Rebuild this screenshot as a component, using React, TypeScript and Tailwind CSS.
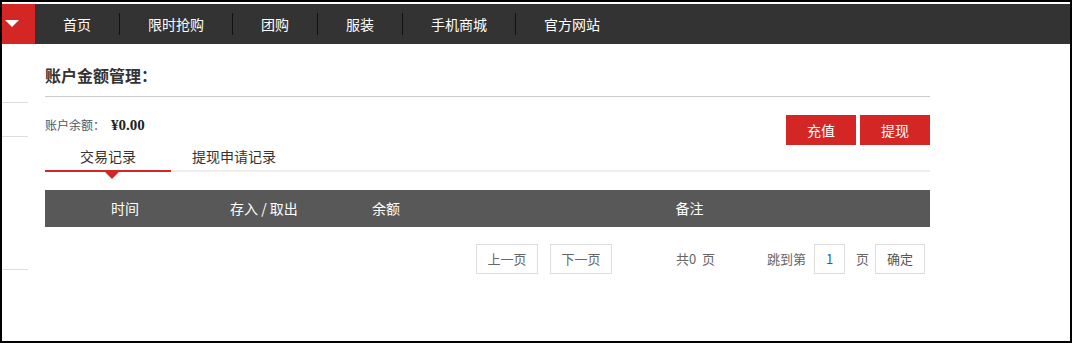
import React from "react";

const navItems = ["首页", "限时抢购", "团购", "服装", "手机商城", "官方网站"];

export default function App() {
  const cjk = { fontFamily: '"Noto Sans CJK SC", "Noto Sans", sans-serif' };
  return (
    <div
      className="w-[1072px] h-[343px] border-2 border-black bg-white pt-[2px] overflow-hidden"
      style={cjk}
    >
      {/* nav */}
      <div className="flex h-[40px] bg-[#333333]">
        <div className="w-[33px] h-full bg-[#d52626] flex items-center pl-[3px] pb-[2px]">
          <div className="w-0 h-0 border-l-[7px] border-r-[7px] border-t-[7px] border-l-transparent border-r-transparent border-t-white" />
        </div>
        <div className="flex items-center">
          {navItems.map((t, i) => (
            <React.Fragment key={t}>
              {i > 0 && <div className="w-px h-[22px] bg-[#111111]" />}
              <div className="px-[28px] text-[14px] leading-[40px] text-white">{t}</div>
            </React.Fragment>
          ))}
        </div>
      </div>

      {/* body */}
      <div className="flex">
        {/* left sidebar fragments */}
        <div className="w-[26px] flex flex-col">
          <div className="mt-[58px] h-px bg-[#dddddd]" />
          <div className="mt-[33px] h-px bg-[#dddddd]" />
          <div className="mt-[132px] h-px bg-[#dddddd]" />
        </div>

        {/* main */}
        <div className="ml-[17px] w-[885px] flex flex-col">
          <div className="mt-[19px] pb-[9px] border-b border-[#cccccc]">
            <div className="text-[16px] leading-[24px] font-bold text-[#333333]">账户金额管理：</div>
          </div>

          <div className="mt-[18px] flex justify-between items-start h-[30px]">
            <div className="flex items-center leading-[18px] mt-px">
              <span className="text-[12px] text-[#555555]">账户余额：</span>
              <span
                className="text-[15px] font-bold text-[#222222] ml-[6px]"
                style={{ fontFamily: '"Liberation Serif", "Noto Sans CJK SC", serif' }}
              >
                ¥0.00
              </span>
            </div>
            <div className="flex gap-[4px]">
              <button className="w-[70px] h-[30px] bg-[#d52626] text-white text-[14px]">充值</button>
              <button className="w-[70px] h-[30px] bg-[#d52626] text-white text-[14px]">提现</button>
            </div>
          </div>

          {/* tabs */}
          <div className="relative flex border-b-2 border-[#eeeeee] h-[27px]">
            <div className="relative w-[126px] text-center text-[14px] leading-[22px] text-[#333333] border-b-2 border-[#d52626] -mb-[2px] h-[27px]">
              交易记录
              <div className="absolute left-[60px] top-[27px] w-0 h-0 border-l-[7px] border-r-[7px] border-t-[7px] border-l-transparent border-r-transparent border-t-[#d52626]" />
            </div>
            <div className="w-[126px] text-center text-[14px] leading-[22px] text-[#333333]">提现申请记录</div>
          </div>

          {/* table header */}
          <div className="mt-[18px] h-[37px] bg-[#585858] flex items-center text-white text-[14px]">
            <div className="w-[160px] text-center">时间</div>
            <div className="w-[118px] text-center">存入 / 取出</div>
            <div className="w-[126px] text-center">余额</div>
            <div className="flex-1 text-center">备注</div>
          </div>

          {/* pagination */}
          <div className="mt-[17px] flex items-center text-[13px] text-[#666666] pl-[431px]">
            <button className="w-[62px] h-[30px] border border-[#dddddd] bg-white text-[13px] text-[#666666]">上一页</button>
            <button className="ml-[12px] w-[62px] h-[30px] border border-[#dddddd] bg-white text-[13px] text-[#666666]">下一页</button>
            <span className="ml-[64px] w-[40px] whitespace-pre">共0  页</span>
            <span className="ml-[51px]">跳到第</span>
            <div className="ml-[8px] w-[31px] h-[30px] -mt-[1px] border border-[#dddddd] flex items-center justify-center text-[#1a5fb4] text-[13px]">1</div>
            <span className="ml-[11px]">页</span>
            <button className="ml-[6px] w-[50px] h-[30px] border border-[#dddddd] bg-white text-[13px] text-[#555555]">确定</button>
          </div>
        </div>
      </div>
    </div>
  );
}
